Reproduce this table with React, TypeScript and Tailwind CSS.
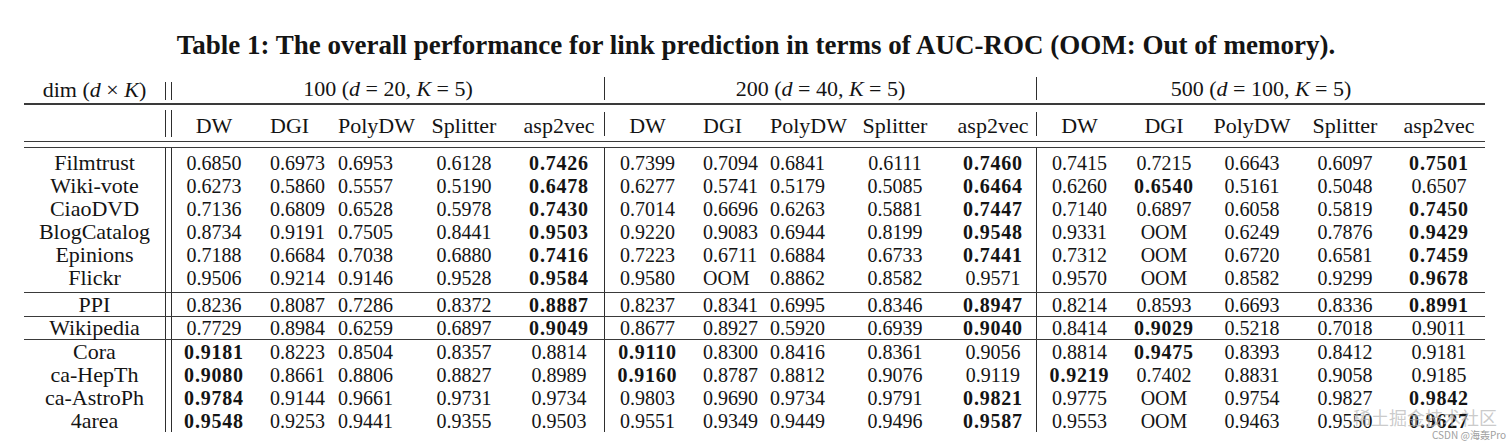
import type { ReactNode } from 'react';

const serif = "font-['Liberation_Serif','Times_New_Roman',serif]";
const cols =
  'grid grid-cols-[141px_7px_84px_76px_90px_84px_98px_1px_85px_75px_90px_80px_101px_1px_85px_84px_92px_94px_93px]';

// per-column placement, matches how the typeset table sits
const align = [
  'justify-center', 'justify-start pl-[14px]', 'justify-start pl-[6px]', 'justify-center', 'justify-center pl-[8px]',
  'justify-center', 'justify-start pl-[13px]', 'justify-start pl-[5px]', 'justify-center', 'justify-center pl-[15px]',
  'justify-center', 'justify-center', 'justify-center', 'justify-center', 'justify-center pl-[1px]',
];

const methods = ['DW', 'DGI', 'PolyDW', 'Splitter', 'asp2vec'];

// '*' marks the best score (bold)
const sections: { rows: [string, string][]; heights: string[] }[] = [
  {
    rows: [
      ['Filmtrust', '0.6850 0.6973 0.6953 0.6128 *0.7426 0.7399 0.7094 0.6841 0.6111 *0.7460 0.7415 0.7215 0.6643 0.6097 *0.7501'],
      ['Wiki-vote', '0.6273 0.5860 0.5557 0.5190 *0.6478 0.6277 0.5741 0.5179 0.5085 *0.6464 0.6260 *0.6540 0.5161 0.5048 0.6507'],
      ['CiaoDVD', '0.7136 0.6809 0.6528 0.5978 *0.7430 0.7014 0.6696 0.6263 0.5881 *0.7447 0.7140 0.6897 0.6058 0.5819 *0.7450'],
      ['BlogCatalog', '0.8734 0.9191 0.7505 0.8441 *0.9503 0.9220 0.9083 0.6944 0.8199 *0.9548 0.9331 OOM 0.6249 0.7876 *0.9429'],
      ['Epinions', '0.7188 0.6684 0.7038 0.6880 *0.7416 0.7223 0.6711 0.6884 0.6733 *0.7441 0.7312 OOM 0.6720 0.6581 *0.7459'],
      ['Flickr', '0.9506 0.9214 0.9146 0.9528 *0.9584 0.9580 OOM 0.8862 0.8582 0.9571 0.9570 OOM 0.8582 0.9299 *0.9678'],
    ],
    heights: ['h-[23px]', 'h-[23px]', 'h-[23px]', 'h-[23px]', 'h-[23px]', 'h-[23px]'],
  },
  {
    rows: [['PPI', '0.8236 0.8087 0.7286 0.8372 *0.8887 0.8237 0.8341 0.6995 0.8346 *0.8947 0.8214 0.8593 0.6693 0.8336 *0.8991']],
    heights: ['h-[23px]'],
  },
  {
    rows: [['Wikipedia', '0.7729 0.8984 0.6259 0.6897 *0.9049 0.8677 0.8927 0.5920 0.6939 *0.9040 0.8414 *0.9029 0.5218 0.7018 0.9011']],
    heights: ['h-[22px]'],
  },
  {
    rows: [
      ['Cora', '*0.9181 0.8223 0.8504 0.8357 0.8814 *0.9110 0.8300 0.8416 0.8361 0.9056 0.8814 *0.9475 0.8393 0.8412 0.9181'],
      ['ca-HepTh', '*0.9080 0.8661 0.8806 0.8827 0.8989 *0.9160 0.8787 0.8812 0.9076 0.9119 *0.9219 0.7402 0.8831 0.9058 0.9185'],
      ['ca-AstroPh', '*0.9784 0.9144 0.9661 0.9731 0.9734 0.9803 0.9690 0.9734 0.9791 *0.9821 0.9775 OOM 0.9754 0.9827 *0.9842'],
      ['4area', '*0.9548 0.9253 0.9441 0.9355 0.9503 0.9551 0.9349 0.9449 0.9496 *0.9587 0.9553 OOM 0.9463 0.9550 *0.9627'],
    ],
    heights: ['h-[23px]', 'h-[23px]', 'h-[23px]', 'h-[23px]'],
  },
];

const empty = Array(15).fill('');

function Cell({ v, i }: { v: string; i: number }) {
  const bold = v.startsWith('*');
  return (
    <div className={`flex items-center ${align[i]} ${bold ? 'font-bold tracking-[0.8px]' : ''}`}>
      {bold ? v.slice(1) : v}
    </div>
  );
}

function DataRow({ name, values, h }: { name: string; values: string[]; h: string }) {
  return (
    <div className={`${cols} ${h} text-[20px] leading-[20px]`}>
      <div className="flex items-center justify-center text-[22px] leading-[22px]">{name}</div>
      <div className="border-x border-[#2e2e2e]" />
      {values.slice(0, 5).map((v, i) => <Cell key={i} v={v} i={i} />)}
      <div className="border-l border-[#2e2e2e]" />
      {values.slice(5, 10).map((v, i) => <Cell key={i} v={v} i={i + 5} />)}
      <div className="border-l border-[#2e2e2e]" />
      {values.slice(10).map((v, i) => <Cell key={i} v={v} i={i + 10} />)}
    </div>
  );
}

function Rule({ thick }: { thick?: boolean }) {
  return <div className={`${thick ? 'h-[2px]' : 'h-px'} bg-[#3a3a3a]`} />;
}

function GroupHead({ size, d }: { size: string; d: string }) {
  return (
    <div className="col-span-5 flex items-center justify-center">
      {size}&nbsp;(<i>d</i>&nbsp;=&nbsp;{d},&nbsp;<i>K</i>&nbsp;=&nbsp;5)
    </div>
  );
}

function HeadBar({ double, pad }: { double?: boolean; pad: string }) {
  return (
    <div className={`flex ${pad}`}>
      <div className={`w-full ${double ? 'border-x' : 'border-l'} border-[#2e2e2e]`} />
    </div>
  );
}

export default function App() {
  const head2: ReactNode[] = [];
  for (let g = 0; g < 3; g++) {
    if (g > 0) head2.push(<HeadBar key={`b${g}`} pad="pt-[7px] pb-[5px]" />);
    methods.forEach((m, j) =>
      head2.push(
        <div key={`${g}-${m}`} className={`flex items-center pt-[6px] ${align[g * 5 + j]}`}>
          {m}
        </div>,
      ),
    );
  }

  return (
    <div className={`relative h-[445px] w-[1512px] overflow-hidden bg-white text-[#141414] ${serif}`}>
      <div className="flex h-[74px] justify-center pt-[30px] text-[27px] font-bold leading-[30px]">
        Table 1: The overall performance for link prediction in terms of AUC-ROC (OOM: Out of memory).
      </div>

      <div className="ml-[24px] w-[1461px]">
        {/* header: embedding size groups */}
        <div className={`${cols} h-[29px] text-[22px] leading-[22px]`}>
          <div className="flex items-center justify-center pt-[3px]">
            dim&nbsp;(<i>d</i>&nbsp;×&nbsp;<i>K</i>)
          </div>
          <HeadBar double pad="pt-[8px] pb-[3px]" />
          <GroupHead size="100" d="20" />
          <HeadBar pad="pt-[3px] pb-[3px]" />
          <GroupHead size="200" d="40" />
          <HeadBar pad="pt-[3px] pb-[3px]" />
          <GroupHead size="500" d="100" />
        </div>
        <Rule thick />

        {/* header: methods */}
        <div className={`${cols} h-[36px] text-[22px] leading-[22px]`}>
          <div />
          <HeadBar double pad="pt-[5px] pb-[4px]" />
          {head2}
        </div>
        <Rule />
        <div className="h-[5px]" />
        <Rule />

        <DataRow name="" values={empty} h="h-[3px]" />
        {sections.map((s, si) => (
          <div key={si}>
            {si > 0 && <Rule />}
            {s.rows.map(([name, vals], ri) => (
              <DataRow key={name} name={name} values={vals.split(' ')} h={s.heights[ri]} />
            ))}
            {si === 0 && <DataRow name="" values={empty} h="h-[3px]" />}
          </div>
        ))}
      </div>

      {/* site watermark */}
      <div className="absolute left-[1353px] top-[407px] font-['Noto_Sans_CJK_SC',sans-serif] text-[18px] leading-[20px] text-[#b4b4b4]/70">
        稀土掘金技术社区
      </div>
      <div className="absolute left-[1432px] top-[429px] font-['Noto_Sans_CJK_SC',sans-serif] text-[10px] leading-[12px] text-[#a0a0a0]">
        CSDN @海轰Pro
      </div>
    </div>
  );
}
